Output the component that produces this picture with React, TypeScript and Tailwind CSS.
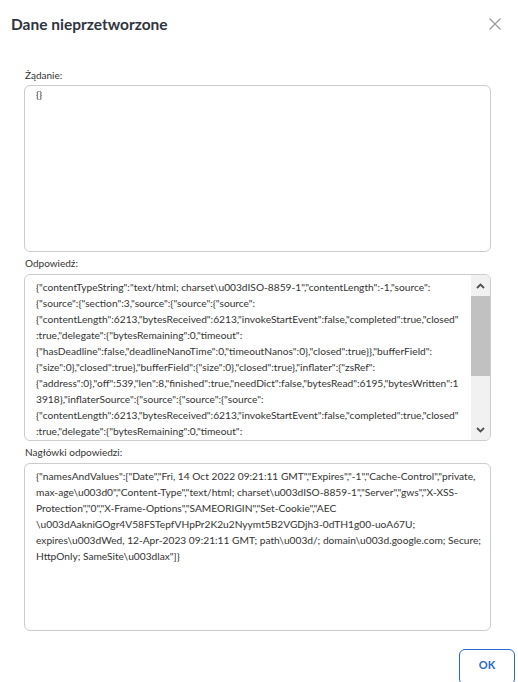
import React from "react";

const responseLines = [
  '{"contentTypeString":"text/html; charset\\u003dISO-8859-1","contentLength":-1,"source":',
  '{"source":{"section":3,"source":{"source":{"source":',
  '{"contentLength":6213,"bytesReceived":6213,"invokeStartEvent":false,"completed":true,"closed"',
  ':true,"delegate":{"bytesRemaining":0,"timeout":',
  '{"hasDeadline":false,"deadlineNanoTime":0,"timeoutNanos":0},"closed":true}},"bufferField":',
  '{"size":0},"closed":true},"bufferField":{"size":0},"closed":true},"inflater":{"zsRef":',
  '{"address":0},"off":539,"len":8,"finished":true,"needDict":false,"bytesRead":6195,"bytesWritten":1',
  '3918},"inflaterSource":{"source":{"source":{"source":',
  '{"contentLength":6213,"bytesReceived":6213,"invokeStartEvent":false,"completed":true,"closed"',
  ':true,"delegate":{"bytesRemaining":0,"timeout":',
  '{"hasDeadline":false,"deadlineNanoTime":0,"timeoutNanos":0},"closed":true}},"bufferField":',
];

const headerLines = [
  '{"namesAndValues":["Date","Fri, 14 Oct 2022 09:21:11 GMT","Expires","-1","Cache-Control","private,',
  'max-age\\u003d0","Content-Type","text/html; charset\\u003dISO-8859-1","Server","gws","X-XSS-',
  'Protection","0","X-Frame-Options","SAMEORIGIN","Set-Cookie","AEC',
  '\\u003dAakniGOgr4V58FSTepfVHpPr2K2u2Nyymt5B2VGDjh3-0dTH1g00-uoA67U;',
  'expires\\u003dWed, 12-Apr-2023 09:21:11 GMT; path\\u003d/; domain\\u003d.google.com; Secure;',
  'HttpOnly; SameSite\\u003dlax"]}',
];

function Lines({ lines, top = "pt-[4px]" }: { lines: string[]; top?: string }) {
  return (
    <div className={`pl-[11px] ${top} text-[10.2px] leading-[16px] text-[#333]`}>
      {lines.map((l, i) => (
        <div key={i} className="whitespace-pre">
          {l}
        </div>
      ))}
    </div>
  );
}

export default function App() {
  return (
    <div
      className="relative w-[518px] h-[682px] overflow-hidden bg-white text-[#333]"
      style={{ fontFamily: "Lato, 'Noto Sans', sans-serif" }}
    >
      <div className="flex items-start justify-between pl-[11px] pr-[17px] pt-[15px]">
        <div className="text-[15.5px] font-bold leading-[18px] text-[#2f3540]">
          Dane nieprzetworzone
        </div>
        <svg width="12" height="12" viewBox="0 0 12 12" className="mt-[3px]">
          <path d="M0.5 0.5 L11.5 11.5 M11.5 0.5 L0.5 11.5" stroke="#9a9a9a" strokeWidth="1.2" fill="none" />
        </svg>
      </div>

      <div className="px-[24px] pr-[27px] mt-[35px]">
        <div className="text-[10px] leading-[14px] pl-[1px]">Żądanie:</div>
        <div className="mt-[3px] h-[167px] rounded-[6px] border border-[#cccccc] overflow-hidden">
          <Lines lines={["{}"]} top="pt-[0px]" />
        </div>

        <div className="mt-[4px] text-[10px] leading-[14px] pl-[1px]">Odpowiedź:</div>
        <div className="mt-[4px] h-[167px] rounded-[6px] border border-[#cccccc] overflow-hidden flex">
          <div className="flex-1 overflow-hidden">
            <Lines lines={responseLines} />
          </div>
          <div className="w-[19px] bg-[#f1f1f1] flex flex-col">
            <div className="h-[21px] flex items-center justify-center">
              <svg width="9" height="6" viewBox="0 0 9 6">
                <path d="M1 5 L4.5 1.5 L8 5" stroke="#505050" strokeWidth="1.8" fill="none" />
              </svg>
            </div>
            <div className="h-[80px] bg-[#c1c1c1]" />
            <div className="flex-1" />
            <div className="h-[21px] flex items-center justify-center">
              <svg width="9" height="6" viewBox="0 0 9 6">
                <path d="M1 1 L4.5 4.5 L8 1" stroke="#505050" strokeWidth="1.8" fill="none" />
              </svg>
            </div>
          </div>
        </div>

        <div className="mt-[4px] text-[10px] leading-[14px] pl-[1px]">Nagłówki odpowiedzi:</div>
        <div className="mt-[4px] h-[168px] rounded-[6px] border border-[#cccccc] overflow-hidden">
          <Lines lines={headerLines} />
        </div>
      </div>

      <div className="flex justify-end pr-[3px] mt-[18px]">
        <button className="w-[56px] h-[36px] rounded-[6px] border-[1.5px] border-[#2767d4] text-[#2767d4] text-[11px] font-bold flex items-center justify-center pb-[3px]">
          OK
        </button>
      </div>
    </div>
  );
}
